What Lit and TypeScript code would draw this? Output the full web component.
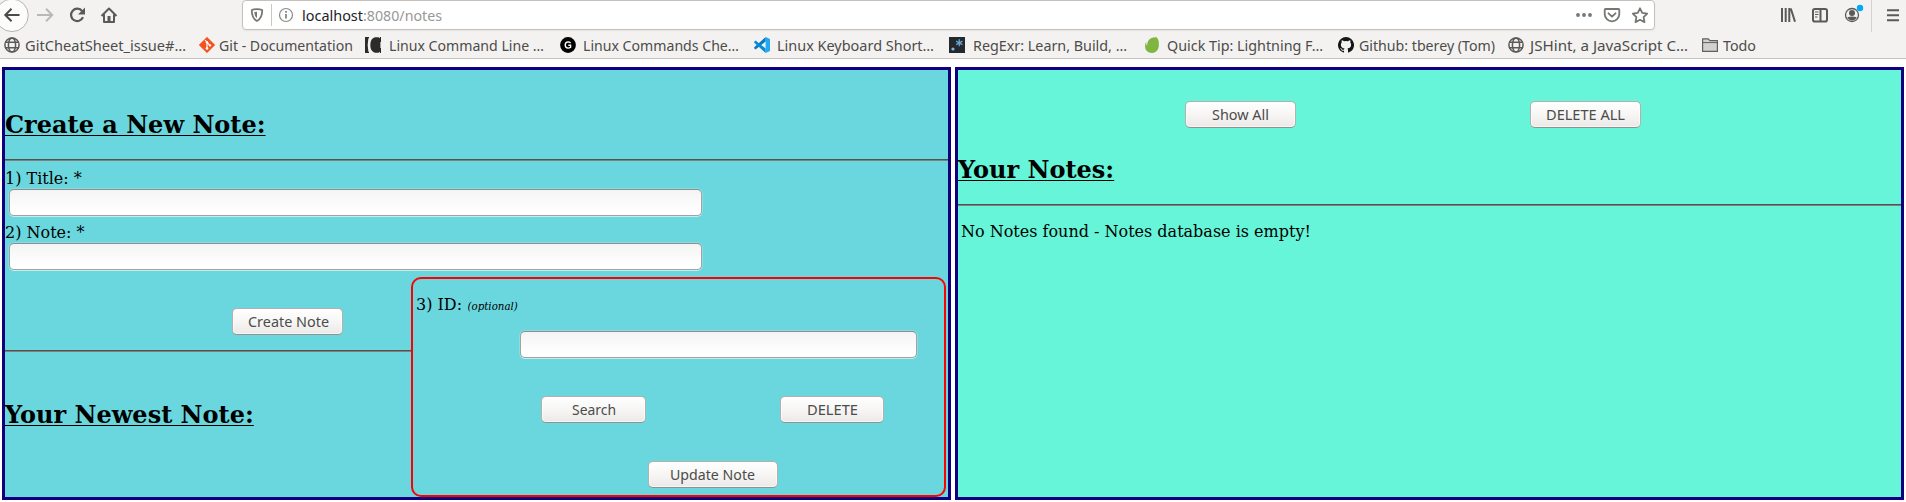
import { LitElement, html, svg, css } from "lit";
import { customElement, property } from "lit/decorators.js";

const globe = svg`<g fill="none" stroke="#5a5a58" stroke-width="1.5"><circle cx="8" cy="8" r="7.1"/><ellipse cx="8" cy="8" rx="3.6" ry="7.1"/><path d="M1.6 5.3h12.8M1.6 10.7h12.8"/></g>`;

const glyphs: Record<string, unknown> = {
  globe,
  git: svg`<path d="M8 .2 15.8 8 8 15.8.2 8z" fill="#f4511e" stroke="#f4511e" stroke-width=".6" stroke-linejoin="round"/><path d="M6 3l2 2.2v6M8 5.5l3 3" stroke="#fff" stroke-width="1.1" fill="none"/><circle cx="8" cy="5.3" r="1.2" fill="#fff"/><circle cx="8" cy="11.4" r="1.3" fill="#fff"/><circle cx="11" cy="8.4" r="1.2" fill="#fff"/>`,
  tlcl: svg`<path d="M0 0h4v1.2H3.400Q1.900 8 3.400 14.800H4V16H0z" fill="#2b2b2b"/><path d="M10 .2h3.500L15 1.300V0h1v5h-.6v6h.6v5h-1v-1.300l-1.500 1H10Q5.300 14.500 5.300 8T10 .2z" fill="#2b2b2b"/>`,
  gblack: svg`<circle cx="8" cy="8" r="7.900" fill="#000"/><path d="M10.600 6.100Q9.700 4.900 8.100 4.900 5.200 5 5.200 8t2.900 3.100q1.400 0 2.500-.9V8.200H8.300" fill="none" stroke="#fff" stroke-width="1.400"/>`,
  vscode: svg`<path d="M11.600 0 16 2v12l-4.400 2z" fill="#23a9f2"/><path d="M11.600 4.500V0L.2 10.300v1l1.400 1.300z" fill="#0879c4"/><path d="M11.600 11.500V16L.2 5.700v-1l1.400-1.300z" fill="#078bd8"/>`,
  regexr: svg`<path d="M0 0h16v16H0z" fill="#24292e"/><circle cx="4" cy="12" r="1.600" fill="#7ab8e8"/><path d="M10.300 2.300v7M7.200 4.100l6.200 3.500M13.400 4.100 7.200 7.600" stroke="#67a7d8" stroke-width="1.300"/>`,
  leaf: svg`<path d="M12.500.3Q15.500 3 14.800 9.500 13.600 16 8 16 1 15.600 1 9q0-2.400 1.300-4Q2 7.300 3 9.200 3.200 3 7 1.300 9.600 0 12.500.3z" fill="#7fb541"/>`,
  github: svg`<path fill="#161616" d="M8 0a8 8 0 0 0-2.530 15.590c.4.070.55-.17.55-.38v-1.490c-2.230.48-2.700-.94-2.700-.94-.36-.93-.89-1.170-.89-1.170-.73-.5.050-.49.050-.49.810.060 1.230.83 1.230.83.710 1.230 1.870.87 2.330.67.070-.52.280-.87.510-1.070-1.780-.2-3.640-.89-3.640-3.950 0-.87.310-1.590.82-2.150-.08-.2-.36-1.020.08-2.120 0 0 .67-.21 2.200.82a7.600 7.600 0 0 1 4 0c1.530-1.040 2.200-.82 2.200-.82.440 1.100.160 1.920.08 2.120.510.560.820 1.270.820 2.150 0 3.070-1.870 3.750-3.650 3.950.290.250.540.730.540 1.480v2.190c0 .21.150.46.550.38A8 8 0 0 0 8 0z"/>`,
  folder: svg`<path d="M.6 14.400V1.800h5.700L8 3.600h7.400v10.800z" fill="#d2d1d0" stroke="#5f5f5d" stroke-width="1.200" stroke-linejoin="round"/><path d="M1 5.600h14.400" stroke="#5f5f5d" stroke-width="1"/>`,
};

// Single-line label drawn to an exact advance width.
@customElement("ui-label")
export class UiLabel extends LitElement {
  @property() text = "";
  @property({ type: Number }) w = 50;
  @property() color = "#4c4c4a";
  @property({ type: Number }) size = 14.6;

  static styles = css`
    :host { display: block; flex: none; height: 20px; }
    svg { display: block; overflow: visible; }
    text { font-family: "Noto Sans", "Open Sans", sans-serif; }
  `;

  render() {
    return html`<svg width=${this.w} height="20"><text x="0" y="15" fill=${this.color} font-size=${this.size} textLength=${this.w} lengthAdjust="spacingAndGlyphs">${this.text}</text></svg>`;
  }
}

interface Bookmark { icon: string; text: string; gap: number; w: number; after: number }

@customElement("app-root")
export class AppRoot extends LitElement {
  private bookmarks: Bookmark[] = [
    { icon: "globe", text: "GitCheatSheet_issue#…", gap: 5, w: 161, after: 13 },
    { icon: "git", text: "Git - Documentation", gap: 4, w: 134, after: 12 },
    { icon: "tlcl", text: "Linux Command Line …", gap: 8, w: 155, after: 16 },
    { icon: "gblack", text: "Linux Commands Che…", gap: 7, w: 156, after: 15 },
    { icon: "vscode", text: "Linux Keyboard Short…", gap: 7, w: 157, after: 15 },
    { icon: "regexr", text: "RegExr: Learn, Build, …", gap: 8, w: 154, after: 17 },
    { icon: "leaf", text: "Quick Tip: Lightning F…", gap: 7, w: 156, after: 15 },
    { icon: "github", text: "Github: tberey (Tom)", gap: 5, w: 136, after: 13 },
    { icon: "globe", text: "JSHint, a JavaScript C…", gap: 6, w: 158, after: 14 },
    { icon: "folder", text: "Todo", gap: 5, w: 33, after: 0 },
  ];

  static styles = css`
    :host { display: block; height: 502px; overflow: hidden; background: #fff; color: #000; font: 16px/19px "DejaVu Serif", serif; }
    * { box-sizing: border-box; }
    svg { display: block; flex: none; }
    .chrome { height: 59px; background: #f4f2f1; border-bottom: 1px solid #c5c2bf; }
    .toolbar { display: flex; height: 32px; }
    .url { display: flex; width: 1413px; height: 30px; margin-left: 117px; margin-right: 115px; background: #fff; border: 1px solid #c5c0bc; border-radius: 4px; box-shadow: 0 1px 2px #0000000f; }
    .address { display: flex; padding: 5px 0 0 5px; flex: 1; }
    .bookmarks { display: flex; align-items: center; height: 26px; padding-left: 4px; }
    .mark { display: flex; align-items: center; height: 20px; }
    .mark ui-label { margin-top: 2px; }
    .page { display: flex; gap: 4px; padding: 8px 2px 0; }
    .panel { width: 949px; height: 433px; border: 3px solid #100080; }
    .create { background: #6ad7de; }
    .list { background: #66f5d8; }
    h2 { margin: 0; font-size: 24px; line-height: 28px; font-weight: 700; text-decoration: underline; text-decoration-thickness: 1px; text-underline-offset: 2px; }
    .rule { height: 2px; border-top: 1px solid #525252; background: #7e8080; }
    .create > h2 { padding-top: 41px; height: 89px; }
    .label { height: 19px; }
    .field { display: block; height: 27px; border: 1px solid #a5a19e; border-top-color: #918d8a; border-radius: 5px; padding: 0 8px; background: linear-gradient(#f4f4f4, #fff 85%); box-shadow: 0 1px 0 #ffffff80, 0 0 0 1px #ffffff30; outline: none; }
    .wide { width: 693px; margin-left: 4px; }
    .first { margin: 8px 0 1px; }
    .second { margin: 7px 0 1px; }
    .lower { display: flex; margin-top: 7px; }
    .newest { width: 406px; }
    .newest .rule { margin-top: 15px; }
    .newest h2 { padding-top: 49px; }
    .button { display: flex; justify-content: center; padding: 3px 0 0; height: 27px; border: 1px solid #b5b0ac; border-bottom-color: #93908e; border-radius: 5px; background: linear-gradient(#fff, #f6f5f4 55%, #ebe9e8); box-shadow: inset 0 0 0 1px #ffffff90; }
    .b111 { width: 111px; }
    .b105 { width: 105px; }
    .b104 { width: 104px; }
    .b130 { width: 130px; }
    .make { margin: 31px 0 0 227px; padding-left: 1px; }
    .id { width: 535px; height: 220px; border: 2px solid red; border-radius: 10px; padding: 16px 0 0 3px; }
    .id .label { display: flex; align-items: baseline; gap: 5.500px; }
    .opt { font-size: 10.240px; font-style: italic; }
    .id .field { width: 397px; margin: 17px 0 0 104px; }
    .pair { display: flex; gap: 134px; margin: 38px 0 0 125px; }
    .update { margin: 38px 0 0 232px; padding-right: 1px; }
    .actions { display: flex; gap: 234px; padding: 31px 0 0 227px; }
    .list h2 { margin-top: 28px; height: 48px; }
    .empty { padding: 16px 3px 0; }
  `;

  private tile(x: number, w: number, art: unknown, h = 32, y = 0) {
    return html`<svg width=${w} height=${h} viewBox="${x} ${y} ${w} ${h}">${art}</svg>`;
  }

  private button(text: string, w: number, cls: string) {
    return html`<div class="button ${cls}" role="button"><ui-label .text=${text} .w=${w}></ui-label></div>`;
  }

  render() {
    return html`
      <div class="chrome">
        <div class="toolbar">
          ${this.tile(0, 30, svg`<circle cx="12" cy="15.300" r="16.300" fill="#fcfcfb" stroke="#b7b3b0"/><path d="M19.500 15H5.500M11.500 8.800 5.300 15l6.200 6.200" fill="none" stroke="#4b4b49" stroke-width="2"/>`)}
          ${this.tile(30, 30, svg`<path d="M37 15h14.500M46 8.800l6.200 6.200-6.200 6.200" fill="none" stroke="#bab8b6" stroke-width="2"/>`)}
          ${this.tile(60, 33, svg`<path d="M82.200 11.200A6.200 6.200 0 1 0 83 17.200" fill="none" stroke="#5a5a58" stroke-width="2.200"/><path d="M85 7.500v7h-7z" fill="#5a5a58"/>`)}
          ${this.tile(93, 32, svg`<path d="M101.500 16 109 8.500l7.500 7.500M104 14.500v7.500h10v-7.500" fill="none" stroke="#5a5a58" stroke-width="2" stroke-linejoin="round"/><path d="M107.500 16h3v6h-3z" fill="#5a5a58"/>`)}
          <div class="url">
            ${this.tile(243, 54, svg`<path d="M257 9.200q3 0 5.200.8.2 8.200-5.200 11-5.400-2.800-5.200-11 2.200-.8 5.200-.8z" fill="none" stroke="#777775" stroke-width="1.800" stroke-linejoin="round"/><path d="M257 11.700v6.500q-2.600-2-2.700-6.200z" fill="#777775"/><path d="M271.500 4v22" stroke="#cbc8c6"/><circle cx="286" cy="15" r="6.500" fill="none" stroke="#8a8a88" stroke-width="1.200"/><path d="M286 14v4.500M286 11v1.800" stroke="#777775" stroke-width="1.600"/>`, 28, 1)}
            <div class="address">
              <ui-label .text=${"localhost"} .w=${61} .size=${15} .color=${"#22221f"}></ui-label>
              <ui-label .text=${":8080/notes"} .w=${79} .size=${15} .color=${"#999896"}></ui-label>
            </div>
            ${this.tile(1570, 84, svg`<g fill="#767674"><circle cx="1578" cy="15" r="1.900"/><circle cx="1584" cy="15" r="1.900"/><circle cx="1590" cy="15" r="1.900"/></g><g fill="none" stroke="#767674" stroke-width="1.800" stroke-linejoin="round" stroke-linecap="round"><path d="M1605.500 9h13q.8 0 .8.900V14a7.300 7.300 0 0 1-14.600 0V9.900q0-.9.800-.9z"/><path d="m1608.500 13.300 3.500 3.300 3.500-3.300"/><path d="m1640 8.300 2.200 4.600 5 .7-3.600 3.500.9 5-4.500-2.400-4.500 2.400.9-5-3.600-3.500 5-.7z"/></g>`, 28, 1)}
          </div>
          ${this.tile(1770, 136, svg`<g fill="none" stroke="#5a5a58" stroke-width="2"><path d="M1782 8v14M1785.700 8v14M1789.300 8v14M1790.800 8.500l4.200 13.300"/><rect x="1813" y="9" width="14" height="12.500" rx="1.800"/><path d="M1820.500 9v12.500"/><path d="M1815 12h3.500M1815 14.500h3.500M1815 17h2.500" stroke-width="1"/><circle cx="1852" cy="15" r="6.500" stroke-width="1.300"/><path d="M1887 10.300h12M1887 15.300h12M1887 20.300h12"/></g><circle cx="1852" cy="13" r="3" fill="#5a5a58"/><path d="M1847.300 17.300q4.700-1.600 9.400 0-1.700 3.200-4.700 3.200t-4.700-3.200z" fill="#5a5a58"/><circle cx="1860" cy="8" r="3.200" fill="#00aaf5"/><path d="M1871.500 0v32" stroke="#d5d2d0"/>`)}
        </div>
        <div class="bookmarks">
          ${this.bookmarks.map((b) => html`
            <div class="mark" style="gap:${b.gap}px;margin-right:${b.after}px">
              <svg width="16" height="16" viewBox="0 0 16 16">${glyphs[b.icon]}</svg>
              <ui-label .text=${b.text} .w=${b.w}></ui-label>
            </div>`)}
        </div>
      </div>
      <main class="page">
        <section class="panel create">
          <h2>Create a New Note:</h2>
          <div class="rule"></div>
          <div class="label first">1) Title: *</div>
          <input class="field wide" aria-label="Title" />
          <div class="label second">2) Note: *</div>
          <input class="field wide" aria-label="Note" />
          <div class="lower">
            <div class="newest">
              ${this.button("Create Note", 81, "b111 make")}
              <div class="rule"></div>
              <h2>Your Newest Note:</h2>
            </div>
            <div class="id">
              <div class="label">3) ID: <span class="opt">(optional)</span></div>
              <input class="field" aria-label="ID" />
              <div class="pair">
                ${this.button("Search", 44, "b105")}
                ${this.button("DELETE", 51, "b104")}
              </div>
              ${this.button("Update Note", 85, "b130 update")}
            </div>
          </div>
        </section>
        <section class="panel list">
          <div class="actions">
            ${this.button("Show All", 57, "b111")}
            ${this.button("DELETE ALL", 79, "b111")}
          </div>
          <h2>Your Notes:</h2>
          <div class="rule"></div>
          <div class="empty">No Notes found - Notes database is empty!</div>
        </section>
      </main>
    `;
  }
}
